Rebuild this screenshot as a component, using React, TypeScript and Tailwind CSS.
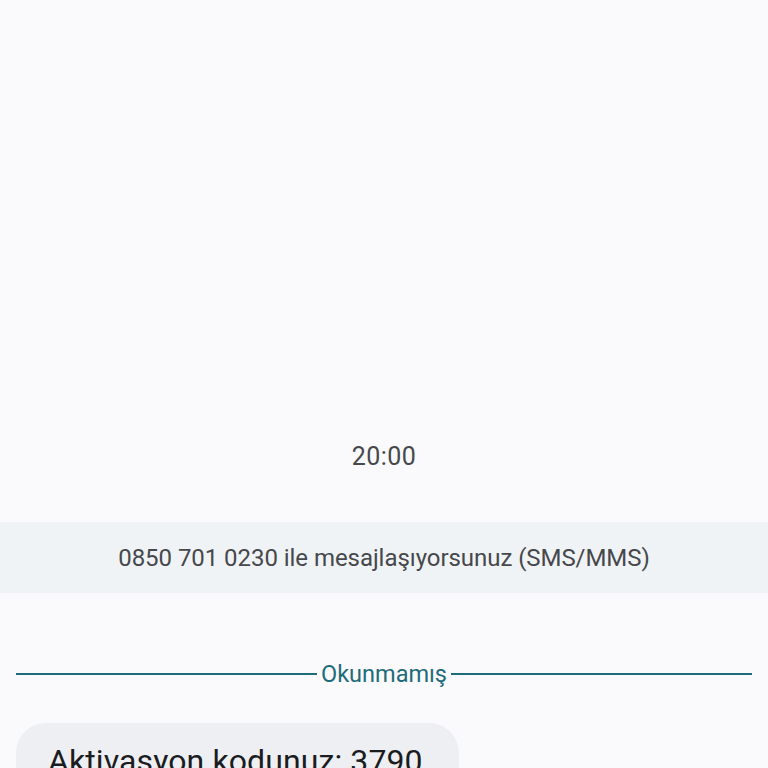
export default function App() {
  return (
    <div
      className="w-[768px] h-[768px] overflow-hidden bg-[#fafafd] flex flex-col"
      style={{ fontFamily: 'Roboto, "Noto Sans", sans-serif' }}
    >
      {/* Timestamp */}
      <div className="shrink-0 h-[522px] pt-[440px] flex justify-center">
        <span className="text-[25px] leading-[34px] tracking-[0.4px] text-[#46484c]">20:00</span>
      </div>

      {/* Info band */}
      <div className="shrink-0 h-[71px] bg-[#f0f3f5] flex items-center justify-center">
        <span className="text-[24px] text-[#46484c] tracking-[-0.05px]">
          0850 701 0230 ile mesajlaşıyorsunuz (SMS/MMS)
        </span>
      </div>

      {/* Unread divider */}
      <div className="shrink-0 mt-[66px] px-4 flex items-center gap-[4px]">
        <div className="flex-1 h-[2px] bg-[#1e6b79]" />
        <span className="text-[23.5px] leading-[30px] text-[#1e6b79]">Okunmamış</span>
        <div className="flex-1 h-[2px] bg-[#1e6b79]" />
      </div>

      {/* Message bubble */}
      <div className="shrink-0 mt-[34px] pl-4">
        <div className="inline-block rounded-[30px] bg-[#eeeff2] pl-[32px] pr-[36px] pt-[18px] pb-[20px]">
          <span className="text-[32px] leading-[40px] tracking-[0.1px] text-[#1b1c1f]">Aktivasyon kodunuz: 3790</span>
        </div>
      </div>
    </div>
  );
}
